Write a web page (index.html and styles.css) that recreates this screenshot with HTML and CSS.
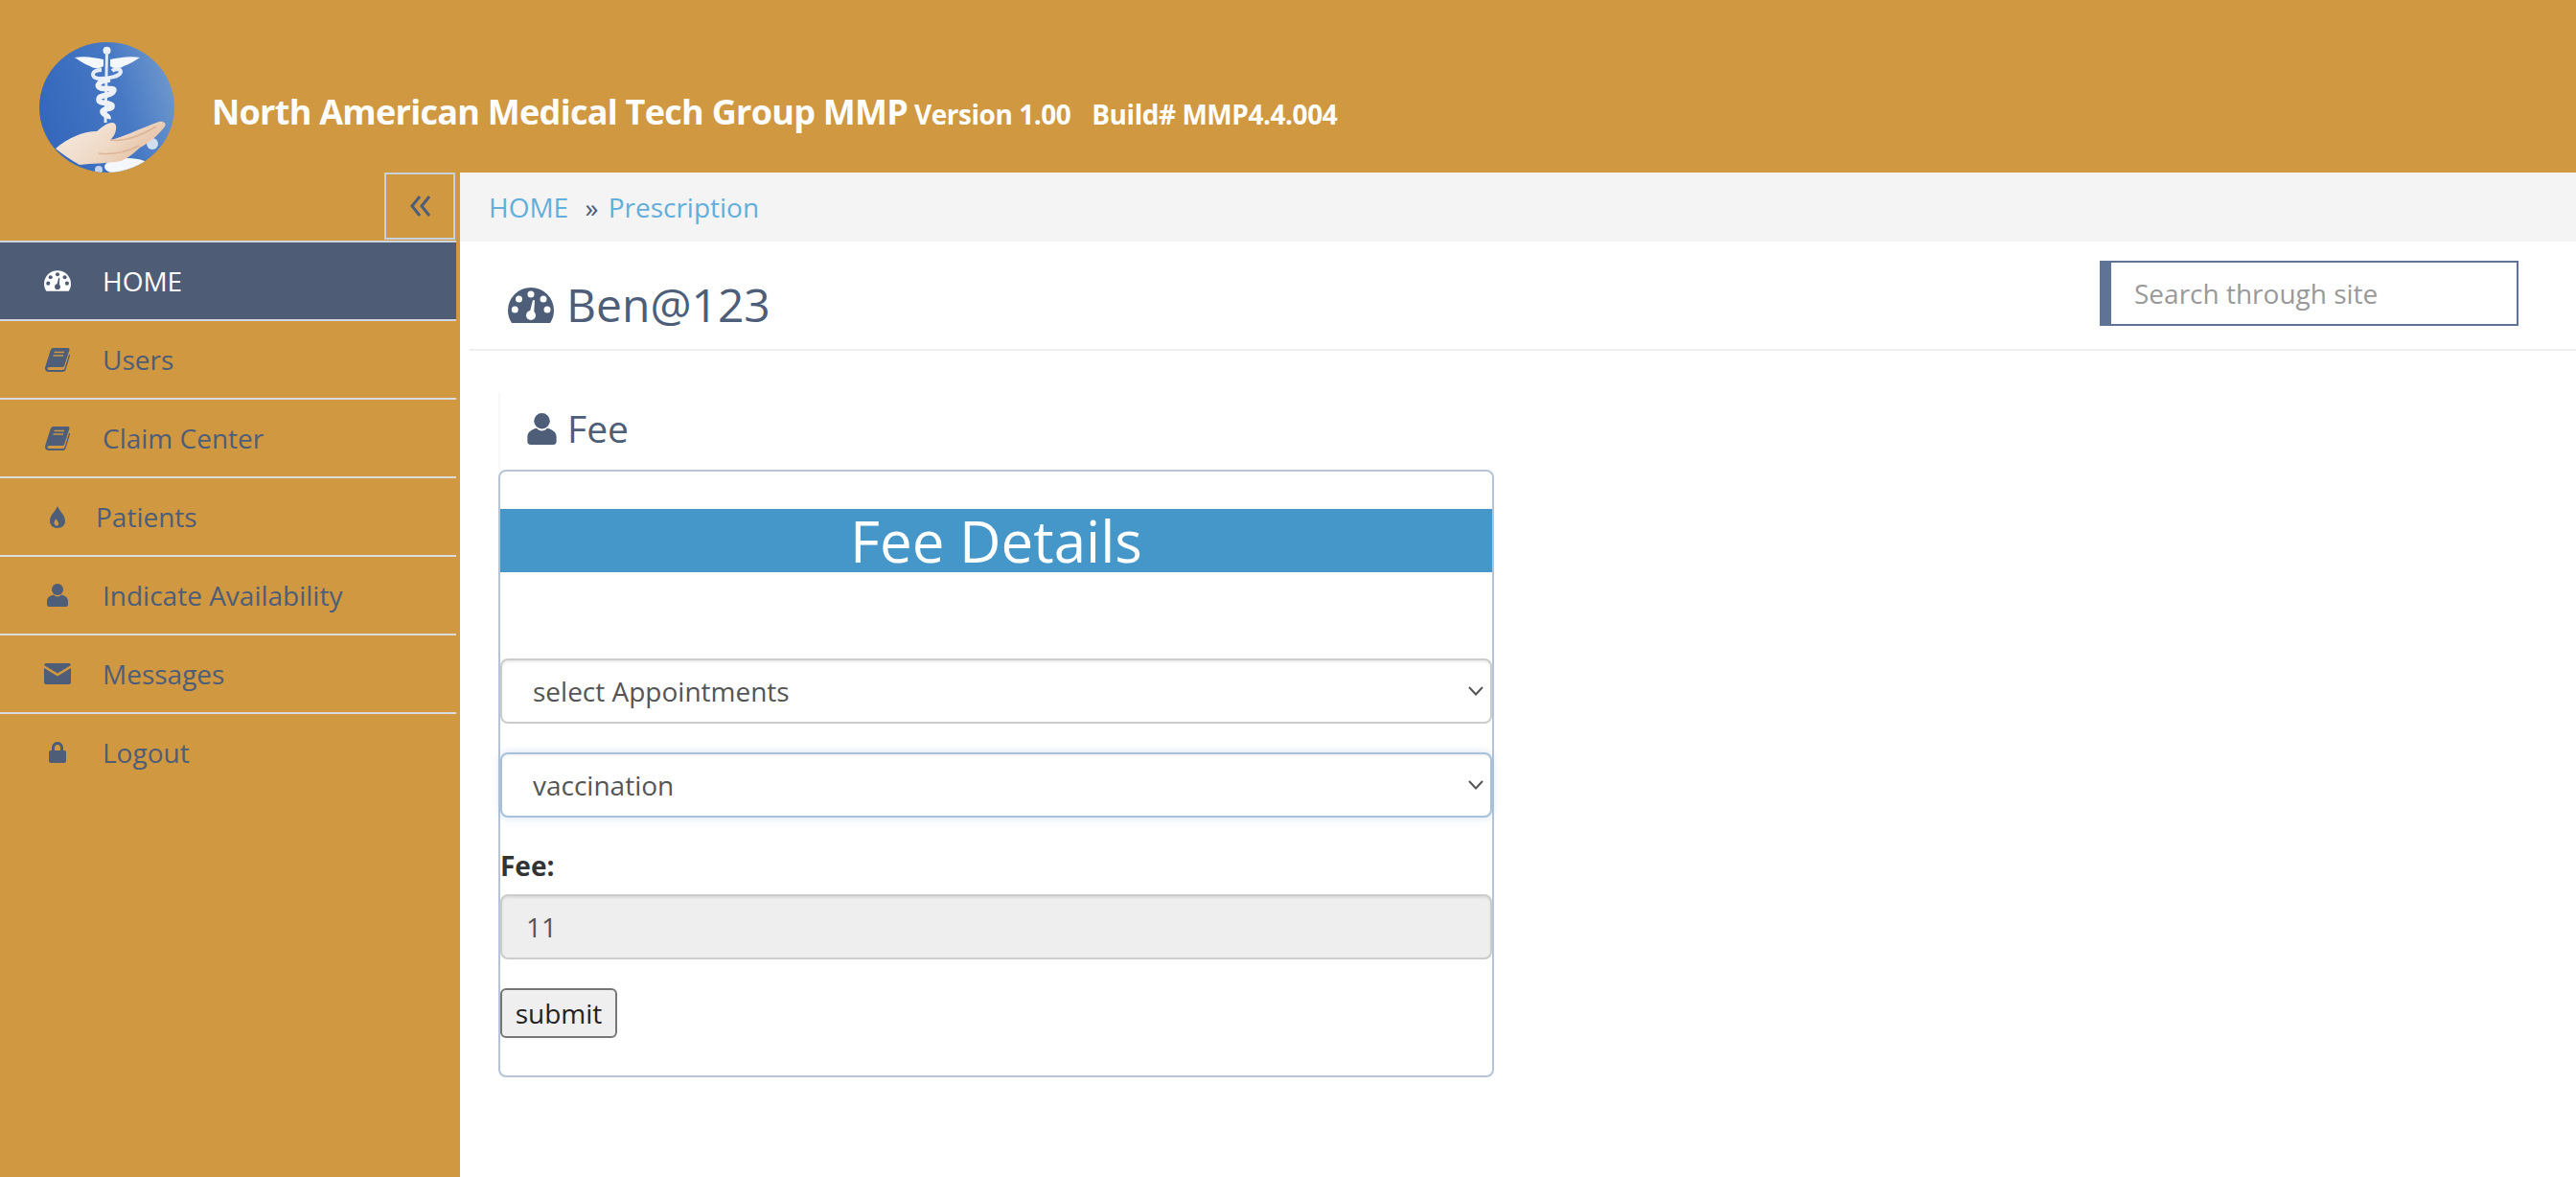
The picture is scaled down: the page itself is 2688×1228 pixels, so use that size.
FILE: index.html
```html
<!DOCTYPE html>
<html lang="en">
<head>
    <meta charset="UTF-8">
    <title>North American Medical Tech Group MMP</title>
    <link rel="stylesheet" href="styles.css">
</head>
<body>
    <!-- Top banner -->
    <header class="banner">
        <svg class="logo" viewBox="0 0 141 136">
            <defs>
                <linearGradient id="sky" x1="0" y1="0.6" x2="1" y2="0.3">
                    <stop offset="0" stop-color="#3467bb"/>
                    <stop offset="0.6" stop-color="#4678c4"/>
                    <stop offset="1" stop-color="#6f98cd"/>
                </linearGradient>
                <linearGradient id="skin" x1="0" y1="0" x2="1" y2="0.5">
                    <stop offset="0" stop-color="#f6ede4"/>
                    <stop offset="0.6" stop-color="#efd9c6"/>
                    <stop offset="1" stop-color="#e6c0a0"/>
                </linearGradient>
                <clipPath id="disc"><ellipse cx="70.5" cy="68" rx="70.5" ry="68"/></clipPath>
                <filter id="soft"><feGaussianBlur stdDeviation="0.6"/></filter>
            </defs>
            <g clip-path="url(#disc)">
                <rect width="141" height="136" fill="url(#sky)"/>
                <g filter="url(#soft)">
                    <ellipse cx="92" cy="130" rx="24" ry="9" fill="#f4f7fb"/>
                    <ellipse cx="118" cy="106" rx="6" ry="6" fill="#cfdff0"/>
                    <circle cx="62" cy="133" r="4" fill="#c5d6ec"/>
                    <circle cx="70.500" cy="8.700" r="4" fill="#eef2f8"/>
                    <path d="M37 16 C47 14 58 16 67 18 L67 25 C63 28 57 28 53 25 C47 23 42 19 37 16Z" fill="#f4f7fb"/>
                    <path d="M105 16 C95 14 83 16 74 18 L74 25 C78 28 84 28 88 25 C94 23 100 19 105 16Z" fill="#f4f7fb"/>
                    <path d="M70.500 10 L69 84" stroke="#e3ebf5" stroke-width="3" fill="none"/>
                    <path d="M65 29 C54 29 53 37 62 38 C72 38 84 36 85 31 C85 27 78 28 76 30" stroke="#e6edf6" stroke-width="4" fill="none"/>
                    <path d="M74 39 C62 40 58 46 64 48 C72 50 81 46 77 52 C73 57 62 54 62 60 C62 65 74 62 76 66 C77 71 68 68 66 72 C65 76 73 76 72 80" stroke="#eef2f8" stroke-width="5.500" fill="none"/>
                    <path d="M17 111 C30 100 45 93 60 93 C64 90 70 84 76 84 C81 84 81 90 79 95 C78 98 75 101 74 102 C85 100 105 90 125 83 C130 82 133 85 131 88 C125 96 115 105 105 110 C97 118 88 123 85 124 C70 127 55 126 42 128 C32 122 24 117 17 111Z" fill="url(#skin)"/>
                    <path d="M74 102 C88 104 105 98 122 88 M62 116 C78 118 92 114 104 108" stroke="#dcb598" stroke-width="1.500" fill="none"/>
                </g>
            </g>
        </svg>
        <div class="brand">
            <span class="brand-name">North American Medical Tech Group MMP</span>
            <span class="brand-version">Version 1.00</span>
            <span class="brand-build">Build# MMP4.4.004</span>
        </div>
    </header>

    <div class="layout">
        <!-- Left navigation -->
        <aside class="sidebar">
            <button class="collapse-btn">
                <svg viewBox="0 0 22 22" width="22" height="22"><path d="M10 1 L2 11 L10 21 M20 1 L12 11 L20 21" fill="none" stroke="currentColor" stroke-width="3"/></svg>
            </button>
            <ul class="nav">
                <li class="nav-item active">
                    <span class="nav-icon">
                        <svg viewBox="0 0 48 37" width="28" height="22"><path class="ico" d="M4 37 C1.500 33 0 29 0 24 A24 24 0 0 1 48 24 C48 29 46.500 33 44 37Z"/><g class="ico-cut"><circle cx="24" cy="7" r="3.500"/><circle cx="11.500" cy="12" r="3.500"/><circle cx="37" cy="12" r="3.500"/><circle cx="7.300" cy="23" r="3.500"/><circle cx="41" cy="23" r="3.500"/><circle cx="24" cy="29" r="5"/><path d="M22 29 L26 13 L28 13.500 L27 29Z"/></g></svg>
                    </span>
                    <a href="#">HOME</a>
                </li>
                <li class="nav-item">
                    <span class="nav-icon">
                        <svg viewBox="0 0 26 25" width="26" height="25"><path class="ico" d="M8.500 0 H24 Q26 0 25.500 2 L20 19 Q19.600 20 18 20 H5 Q2 20 2.500 22 Q3 23 5 23 H18 Q20 23 20.500 21.500 L25 7 H26 V8 L21.500 23 Q21 25 18 25 H4 Q0 25 0 21 Q0 20 .5 19 L5.500 3 Q6.500 0 8.500 0Z"/><path class="ico-line" d="M9.500 4.500 H20 M8.500 8 H19"/></svg>
                    </span>
                    <a href="#">Users</a>
                </li>
                <li class="nav-item">
                    <span class="nav-icon">
                        <svg viewBox="0 0 26 25" width="26" height="25"><path class="ico" d="M8.500 0 H24 Q26 0 25.500 2 L20 19 Q19.600 20 18 20 H5 Q2 20 2.500 22 Q3 23 5 23 H18 Q20 23 20.500 21.500 L25 7 H26 V8 L21.500 23 Q21 25 18 25 H4 Q0 25 0 21 Q0 20 .5 19 L5.500 3 Q6.500 0 8.500 0Z"/><path class="ico-line" d="M9.500 4.500 H20 M8.500 8 H19"/></svg>
                    </span>
                    <a href="#">Claim Center</a>
                </li>
                <li class="nav-item nav-item-tight">
                    <span class="nav-icon">
                        <svg viewBox="0 0 16 23" width="16" height="23"><path class="ico" fill-rule="evenodd" d="M8 0 C9.500 5 16 9 16 15.500 C16 20 12.500 23 8 23 C3.500 23 0 20 0 15.500 C0 9 6.500 5 8 0Z M6.500 13 C5.500 15 4.500 16 4.500 17.500 C4.500 19.500 6 20.500 7.500 20.500 C9 20.500 9.500 19 9 17.500 C8.500 16 7 15 6.500 13Z"/></svg>
                    </span>
                    <a href="#">Patients</a>
                </li>
                <li class="nav-item">
                    <span class="nav-icon">
                        <svg viewBox="0 0 22 24" width="22" height="24"><circle class="ico" cx="11" cy="6" r="6"/><path class="ico" d="M7 11.500 C9 14 13 14 15 11.500 C19 12.500 22 14.500 22 18 V21.500 Q22 24 19.500 24 H2.500 Q0 24 0 21.500 V18 C0 14.500 3 12.500 7 11.500Z"/></svg>
                    </span>
                    <a href="#">Indicate Availability</a>
                </li>
                <li class="nav-item">
                    <span class="nav-icon">
                        <svg viewBox="0 0 28 22" width="28" height="22"><path class="ico" d="M2 0 H26 Q27.500 0 28 2 L14 10.500 L0 2 Q.5 0 2 0Z"/><path class="ico" d="M0 5 L14 13.500 L28 5 V20 Q28 22 26 22 H2 Q0 22 0 20Z"/></svg>
                    </span>
                    <a href="#">Messages</a>
                </li>
                <li class="nav-item nav-item-last">
                    <span class="nav-icon">
                        <svg viewBox="0 0 18 22" width="18" height="22"><path class="ico" fill-rule="evenodd" d="M3 9 V6.500 C3 2.500 5.500 0 9 0 C12.500 0 15 2.500 15 6.500 V9 H16 Q18 9 18 11 V20 Q18 22 16 22 H2 Q0 22 0 20 V11 Q0 9 2 9Z M6 9 H12 V6.500 C12 4 11 3 9 3 C7 3 6 4 6 6.500Z"/></svg>
                    </span>
                    <a href="#">Logout</a>
                </li>
            </ul>
        </aside>

        <main class="main">
            <div class="breadcrumb">
                <a href="#">HOME</a>
                <span class="breadcrumb-sep">»</span>
                <a href="#">Prescription</a>
            </div>

            <div class="page-head">
                <h3 class="page-title">
                    <svg viewBox="0 0 48 37" width="48" height="37"><path class="ico" d="M4 37 C1.500 33 0 29 0 24 A24 24 0 0 1 48 24 C48 29 46.500 33 44 37Z"/><g class="ico-white"><circle cx="24" cy="7" r="3.500"/><circle cx="11.500" cy="12" r="3.500"/><circle cx="37" cy="12" r="3.500"/><circle cx="7.300" cy="23" r="3.500"/><circle cx="41" cy="23" r="3.500"/><circle cx="24" cy="29" r="5"/><path d="M22 29 L26 13 L28 13.500 L27 29Z"/></g></svg>
                    Ben@123
                </h3>
                <input class="site-search" type="text" placeholder="Search through site">
            </div>

            <section class="panel">
                <h4 class="panel-title">
                    <svg viewBox="0 0 22 24" width="31" height="33"><circle class="ico" cx="11" cy="6" r="6"/><path class="ico" d="M7 11.500 C9 14 13 14 15 11.500 C19 12.500 22 14.500 22 18 V21.500 Q22 24 19.500 24 H2.500 Q0 24 0 21.500 V18 C0 14.500 3 12.500 7 11.500Z"/></svg>
                    Fee
                </h4>
                <div class="panel-box">
                    <h2 class="box-title">Fee Details</h2>
                    <form class="fee-form">
                        <div class="form-group select-wrap">
                            <select class="form-control">
                                <option>select Appointments</option>
                            </select>
                            <svg class="chevron" viewBox="0 0 16 10" width="16" height="10"><path d="M1 1 L8 8.500 L15 1" fill="none" stroke="#555" stroke-width="2"/></svg>
                        </div>
                        <div class="form-group select-wrap">
                            <select class="form-control is-focused">
                                <option>vaccination</option>
                            </select>
                            <svg class="chevron" viewBox="0 0 16 10" width="16" height="10"><path d="M1 1 L8 8.500 L15 1" fill="none" stroke="#555" stroke-width="2"/></svg>
                        </div>
                        <div class="form-group">
                            <label class="fee-label" for="fee">Fee:</label>
                            <input class="form-control fee-input" id="fee" type="text" value="11" readonly>
                        </div>
                        <button class="submit-btn" type="button">submit</button>
                    </form>
                </div>
            </section>
        </main>
    </div>
</body>
</html>
```

FILE: styles.css
```css
* {
    box-sizing: border-box;
}

html, body {
    height: 100%;
}

body {
    margin: 0;
    font-family: "Open Sans", sans-serif;
    font-size: 28px;
    line-height: 40px;
    color: #333;
    background-color: #fff;
    display: flex;
    flex-direction: column;
}

a {
    text-decoration: none;
}

.ico {
    fill: #4e5d78;
}

.ico-white {
    fill: #fff;
}

/* Top banner */
.banner {
    height: 180px;
    flex-shrink: 0;
    background-color: #d09840;
    display: flex;
    align-items: flex-start;
    padding-left: 41px;
}

.logo {
    width: 141px;
    height: 136px;
    margin-top: 44px;
    flex-shrink: 0;
}

.brand {
    margin-left: 39px;
    margin-top: 97px;
    color: #fff;
    font-weight: 700;
    white-space: nowrap;
    letter-spacing: -0.46px;
}

.brand-name {
    font-size: 36px;
    letter-spacing: -0.72px;
}

.brand-build {
    margin-left: 15px;
}

.layout {
    flex: 1;
    display: flex;
}

/* Sidebar */
.sidebar {
    width: 480px;
    flex-shrink: 0;
    background-color: #d09840;
    display: flex;
    flex-direction: column;
}

.collapse-btn {
    align-self: flex-end;
    width: 74px;
    height: 70px;
    margin: 0 5px 1px 0;
    padding: 0 0 0 2px;
    background: transparent;
    border: 2px solid #c6d3de;
    color: #4e5d78;
    display: flex;
    align-items: center;
    justify-content: center;
}

.nav {
    list-style: none;
    margin: 0;
    padding: 0;
    width: 476px;
}

.nav-item {
    height: 82px;
    border-bottom: 2px solid #dcdcdc;
    display: flex;
    align-items: center;
    padding-left: 46px;
}

.nav-item a {
    color: #4e5d78;
    margin-left: 33px;
}

.nav-item-tight a {
    margin-left: 26px;
}

.nav-item-last {
    border-bottom-color: transparent;
}

.nav-item.active {
    height: 84px;
    background-color: #4e5c76;
    border-top: 2px solid #cfd8e0;
    border-bottom: 2px solid #cfd8e0;
}

.nav-item.active a {
    color: #fff;
}

.nav-item.active .ico {
    fill: #fff;
}

.ico-cut {
    fill: #4e5c76;
}

.ico-line {
    fill: none;
    stroke: #d09840;
    stroke-width: 1.6;
}

.nav-icon {
    width: 28px;
    display: flex;
    justify-content: center;
}

/* Main column */
.main {
    flex: 1;
    min-width: 0;
}

.breadcrumb {
    height: 72px;
    background-color: #f4f4f4;
    padding: 16px 0 0 30px;
    color: #4e5d78;
}

.breadcrumb a {
    color: #63aedb;
}

.breadcrumb-sep {
    margin: 0 3px 0 10px;
}

.page-head {
    margin-left: 10px;
    height: 114px;
    border-bottom: 2px solid #eee;
    display: flex;
    justify-content: space-between;
    align-items: flex-start;
    padding: 20px 60px 0 40px;
}

.page-title {
    margin: 18px 0 0;
    font-size: 48px;
    line-height: 56px;
    font-weight: 400;
    color: #4e5d78;
    display: flex;
    align-items: center;
    gap: 13px;
}

.site-search {
    width: 437px;
    height: 68px;
    padding: 0 24px;
    border: 2px solid #5f7396;
    border-left-width: 12px;
    border-radius: 0;
    font-family: inherit;
    font-size: 28px;
    color: #555;
    outline: none;
}

.site-search::placeholder {
    color: #999;
    opacity: 1;
}

.panel {
    margin: 44px 0 0 40px;
    width: 1039px;
}

.panel-title {
    margin: 0;
    height: 80px;
    padding: 0 0 6px 28px;
    border-left: 2px solid #f8f8f8;
    font-size: 39px;
    line-height: 50px;
    font-weight: 400;
    color: #4e5d78;
    display: flex;
    align-items: center;
    gap: 11px;
}

.panel-box {
    border: 2px solid #b7c4d8;
    border-radius: 8px;
    padding: 39px 0 39px;
    height: 634px;
}

.box-title {
    margin: 0 0 90px;
    height: 66px;
    background-color: #4497c8;
    color: #fff;
    font-size: 60px;
    line-height: 66px;
    font-weight: 400;
    text-align: center;
}

.form-group {
    margin-bottom: 30px;
}

.select-wrap {
    position: relative;
}

.form-control {
    display: block;
    width: 100%;
    height: 68px;
    border: 2px solid #ccc;
    border-radius: 8px;
    background-color: #fff;
    box-shadow: inset 0 2px 2px rgba(0, 0, 0, 0.075);
    font-family: inherit;
    font-size: 28px;
    color: #555;
    padding: 0 25px;
    outline: none;
}

select.form-control {
    appearance: none;
    padding-left: 32px;
}

.form-control.is-focused {
    border-color: #a6c1dc;
    box-shadow: inset 0 2px 2px rgba(0, 0, 0, 0.04), 0 0 8px rgba(102, 155, 210, 0.3);
}

.chevron {
    position: absolute;
    right: 9px;
    top: 29px;
    pointer-events: none;
}

.fee-label {
    display: block;
    font-weight: 700;
    margin-bottom: 10px;
}

.fee-input {
    background-color: #eee;
}

.submit-btn {
    display: block;
    width: 122px;
    height: 52px;
    padding: 0;
    border: 2px solid #767676;
    border-radius: 6px;
    background-color: #efefef;
    font-family: inherit;
    font-size: 28px;
    color: #222;
}
```
